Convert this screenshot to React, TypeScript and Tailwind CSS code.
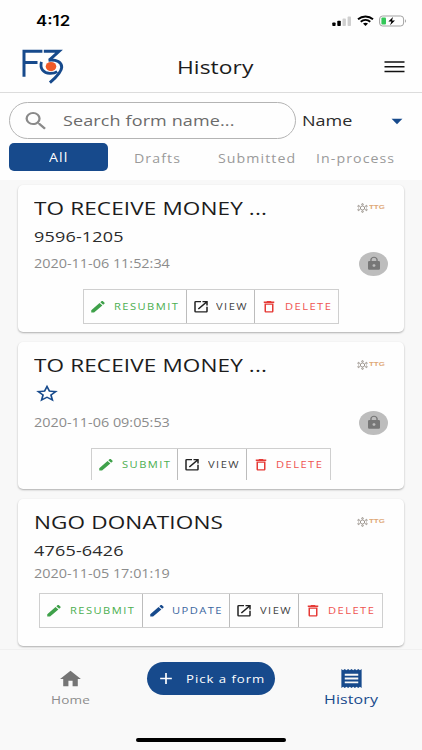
import type { ReactNode } from "react";
import type { IconType } from "react-icons";
import {
  MdAdd,
  MdArrowDropDown,
  MdDeleteOutline,
  MdEdit,
  MdHome,
  MdLock,
  MdOpenInNew,
  MdReceipt,
  MdSearch,
  MdStarBorder,
} from "react-icons/md";

type Action = "resubmit" | "submit" | "update" | "view" | "delete";

type Form = {
  title: string;
  number?: string;
  date: string;
  dateRow: string;
  actionRow: string;
  actionBorder: string;
  locked: boolean;
  actions: Action[];
};

const ACTIONS: Record<
  Action,
  { label: string; Icon: IconType; width: string; icon: string; color: string }
> = {
  resubmit: {
    label: "RESUBMIT",
    Icon: MdEdit,
    width: "w-[102.5px]",
    icon: "text-[#3fa14a]",
    color: "text-[#4caf50]",
  },
  submit: {
    label: "SUBMIT",
    Icon: MdEdit,
    width: "w-[86px]",
    icon: "text-[#3fa14a]",
    color: "text-[#4caf50]",
  },
  update: {
    label: "UPDATE",
    Icon: MdEdit,
    width: "w-[87.5px]",
    icon: "text-[#174a8c]",
    color: "text-[#3a66a0]",
  },
  view: {
    label: "VIEW",
    Icon: MdOpenInNew,
    width: "w-[68.5px]",
    icon: "text-[#222222]",
    color: "text-[#444444]",
  },
  delete: {
    label: "DELETE",
    Icon: MdDeleteOutline,
    width: "w-[83px]",
    icon: "text-[#e53935]",
    color: "text-[#ef5350]",
  },
};

const forms: Form[] = [
  {
    title: "TO RECEIVE MONEY ...",
    number: "9596-1205",
    date: "2020-11-06 11:52:34",
    dateRow: "h-[27px]",
    actionRow: "mt-[12px] h-[35px]",
    actionBorder: "border",
    locked: true,
    actions: ["resubmit", "view", "delete"],
  },
  {
    title: "TO RECEIVE MONEY ...",
    date: "2020-11-06 09:05:53",
    dateRow: "h-[31px]",
    actionRow: "mt-[10px] h-[32px]",
    actionBorder: "border border-b-0",
    locked: true,
    actions: ["submit", "view", "delete"],
  },
  {
    title: "NGO DONATIONS",
    number: "4765-6426",
    date: "2020-11-05 17:01:19",
    dateRow: "h-[19px]",
    actionRow: "mt-[10px] h-[35px]",
    actionBorder: "border",
    locked: false,
    actions: ["resubmit", "update", "view", "delete"],
  },
];

// Text in the app's wide face
const Wide = ({ className = "", children }: { className?: string; children: ReactNode }) => (
  <span
    className={`block origin-left scale-x-120 whitespace-nowrap leading-none ${className}`}
  >
    {children}
  </span>
);

const StatusBar = () => (
  <div className="flex h-[42px] items-center justify-between pl-[35.5px] pr-[15px]">
    <Wide className="font-[Inter] text-[14px] font-semibold text-black">4:12</Wide>
    <div className="flex items-center">
      <svg width="20" height="12" viewBox="0 0 20 12">
        <rect x="0.3" y="7.5" width="3.3" height="3.5" rx="0.8" fill="#000" />
        <rect x="5.3" y="5.8" width="3.5" height="5.2" rx="0.8" fill="#000" />
        <rect x="10.5" y="3.6" width="3.4" height="7.4" rx="0.8" fill="#cfcfcf" />
        <rect x="15.6" y="1.6" width="3.4" height="9.4" rx="0.8" fill="#cfcfcf" />
      </svg>
      <svg className="ml-[5px]" width="17" height="12" viewBox="0 0 17 12" fill="none" stroke="#000">
        <path d="M1 4.3C5.2 .6 11.8 .6 16 4.3" strokeWidth="1.9" />
        <path d="M3.7 6.7c2.8-2.3 6.8-2.3 9.6 0" strokeWidth="1.8" />
        <path d="M6 8.6c1.6-1.1 3.4-1.1 5 0L8.5 11z" fill="#000" stroke="none" />
      </svg>
      <svg className="ml-[5px]" width="28" height="12" viewBox="0 0 28 12">
        <rect x="0.6" y="1" width="24" height="10" rx="3" fill="none" stroke="#a3a3a3" />
        <rect x="2.4" y="2.6" width="4.6" height="6.8" rx="1" fill="#34c759" />
        <path d="M14 1.9 9.4 6.6h3l-1.3 3.6 4.9-4.7h-3z" fill="#000" />
        <path d="M26 4.3c1.3.5 1.3 2.9 0 3.4z" fill="#a3a3a3" />
      </svg>
    </div>
  </div>
);

const Logo = () => (
  <svg width="43" height="36" viewBox="0 0 43 36" fill="none" stroke="#174a8c">
    <path d="M3 27.8V2.3H21.4M3 13.5H16.5" strokeWidth="3" />
    <path d="M22.8 2.3H38L28.6 10.8" strokeWidth="3" />
    <path
      d="M27.5 11.2c8.4-1 13.2 2.2 13.2 7 0 4.4-4.5 9.1-11.8 15.5"
      strokeWidth="3"
    />
    <path d="M20.4 12.9c-1.8 6.9 2.2 11.2 8.4 11.5 2.8.1 5.4-.4 7.4-1.8" strokeWidth="2.8" />
    <ellipse cx="30" cy="17.6" rx="5.3" ry="4.6" fill="#f05a28" stroke="none" />
  </svg>
);

const Header = () => (
  <header className="h-[93px] border-b border-[#dcdcdc] bg-[#fefefe] shadow-[0_1px_2px_rgba(0,0,0,0.12)]">
    <StatusBar />
    <div className="flex h-[50px] items-center justify-between pl-[21px] pr-[17px]">
      <Logo />
      <Wide className="ml-[113px] mr-auto text-[19px] font-medium tracking-[0.05px] text-[#1c1c1c]">
        History
      </Wide>
      <svg width="21" height="12" viewBox="0 0 21 12" stroke="#111111" strokeWidth="1.5">
        <path d="M.5 1H20.5M.5 5.8H20.5M.5 10.6H20.5" />
      </svg>
    </div>
  </header>
);

const SearchRow = () => (
  <div className="flex items-center pl-[9px] pt-[9px]">
    <div className="flex h-[37px] w-[287px] items-center rounded-full border border-[#b4b4b4] pl-[12px]">
      <MdSearch preserveAspectRatio="none" className="h-[24px] w-[28px] text-[#8a8a8a]" />
      <Wide className="ml-[13px] text-[15px] tracking-[0.1px] text-[#6b6b6b]">
        Search form name...
      </Wide>
    </div>
    <Wide className="ml-[5.5px] w-[78.5px] text-[15px] text-[#2b2b2b]">Name</Wide>
    <MdArrowDropDown preserveAspectRatio="none" className="ml-[4px] size-[26px] text-[#174a8c]" />
  </div>
);

const Tabs = () => (
  <div className="flex h-[41px] items-start pl-[9px] pt-[4px] text-[11.8px] tracking-[0.9px] text-[#9a9a9a]">
    <div className="flex h-[28px] w-[99px] items-center rounded-[5px] bg-[#174a8c] pl-[40px] pt-[2px]">
      <Wide className="text-white">All</Wide>
    </div>
    <div className="flex h-[32px] w-[83px] items-center pl-[26px]">
      <Wide>Drafts</Wide>
    </div>
    <div className="flex h-[32px] w-[98px] items-center pl-[26.5px]">
      <Wide>Submitted</Wide>
    </div>
    <div className="flex h-[32px] items-center pl-[26.5px]">
      <Wide>In-process</Wide>
    </div>
  </div>
);

const CompanyLogo = () => (
  <div className="flex h-[10px] w-[28px] items-center">
    <svg width="11" height="10" viewBox="0 0 11 10" fill="none" stroke="#9d968f" strokeWidth="1">
      <ellipse cx="5.5" cy="5" rx="2.2" ry="2" />
      <circle cx="5.5" cy="1.4" r="0.8" />
      <circle cx="5.5" cy="8.6" r="0.8" />
      <circle cx="1.6" cy="3.2" r="0.8" />
      <circle cx="9.4" cy="3.2" r="0.8" />
      <circle cx="1.6" cy="6.8" r="0.8" />
      <circle cx="9.4" cy="6.8" r="0.8" />
    </svg>
    <span className="ml-px block origin-left scale-x-165 font-['Liberation_Sans'] text-[4.8px] font-bold leading-none text-[#dfa877]">
      TTG
    </span>
  </div>
);

const ActionButton = ({ action }: { action: Action }) => {
  const { label, Icon, width, icon, color } = ACTIONS[action];
  return (
    <div className={`flex items-center pl-[5px] ${width}`}>
      <Icon preserveAspectRatio="none" className={`h-[15.5px] w-[18px] shrink-0 ${icon}`} />
      <Wide className={`ml-[6.5px] text-[9.3px] tracking-[1.2px] ${color}`}>{label}</Wide>
    </div>
  );
};

const FormCard = ({ form }: { form: Form }) => (
  <article className="h-[147px] rounded-[5px] bg-[#fefefe] pt-[8px] shadow-[0_1px_2px_rgba(0,0,0,0.3)]">
    <div className="flex h-[30px] items-center justify-between pl-[16px] pr-[19.5px]">
      <Wide className="text-[18.8px] tracking-[0.1px] text-[#1c1c1c]">{form.title}</Wide>
      <CompanyLogo />
    </div>
    <div className="flex h-[27px] items-center pl-[16px]">
      {form.number ? (
        <Wide className="text-[15px] tracking-[0.15px] text-[#2b2b2b]">{form.number}</Wide>
      ) : (
        <MdStarBorder preserveAspectRatio="none" className="h-[21px] w-[26px] text-[#174a8c]" />
      )}
    </div>
    <div className={`flex items-center justify-between px-[16px] ${form.dateRow}`}>
      <Wide className="text-[12px] text-[#8c8c8c]">{form.date}</Wide>
      {form.locked && (
        <div className="flex h-[24px] w-[29px] items-center justify-center rounded-[50%] bg-[#bdbdbd]">
          <MdLock preserveAspectRatio="none" className="h-[15px] w-[18px] text-[#777777]" />
        </div>
      )}
    </div>
    <div className={`flex justify-center ${form.actionRow}`}>
      <div className={`flex divide-x divide-[#bcbcbc] border-[#cfcfcf] ${form.actionBorder}`}>
        {form.actions.map((action) => (
          <ActionButton key={action} action={action} />
        ))}
      </div>
    </div>
  </article>
);

const BottomNav = () => (
  <nav className="flex h-[101px] flex-col justify-between border-t border-[#f0f0f0] bg-[#f9f9f9] pb-[8px]">
    <div className="flex items-start">
      <div className="flex w-[147px] flex-col pl-[51px] pt-[18px]">
        <MdHome preserveAspectRatio="none" className="ml-[7px] h-[22px] w-[25px] text-[#757575]" />
        <Wide className="mt-[4px] text-[11.3px] tracking-[0.15px] text-[#8c8c8c]">Home</Wide>
      </div>
      <button className="mt-[12px] flex h-[33px] w-[128px] items-center rounded-full bg-[#174a8c] pl-[9px] text-white">
        <MdAdd preserveAspectRatio="none" className="h-[19px] w-[20px]" />
        <Wide className="ml-[9.5px] text-[11px] font-medium tracking-[0.8px]">Pick a form</Wide>
      </button>
      <div className="flex flex-col pl-[49px] pt-[17px] text-[#174a8c]">
        <MdReceipt preserveAspectRatio="none" className="ml-[14px] h-[23px] w-[27px]" />
        <Wide className="mt-[2.5px] text-[13.3px] tracking-[0.1px]">History</Wide>
      </div>
    </div>
    <div className="mx-auto h-[4px] w-[150px] rounded-full bg-black" />
  </nav>
);

const App = () => {
  return (
    <div className="flex h-[750px] w-[422px] flex-col overflow-hidden bg-[#f8f8f8] font-['Open_Sans',sans-serif]">
      <Header />
      <section className="h-[87px] bg-[#fefefe]">
        <SearchRow />
        <Tabs />
      </section>
      <main className="flex flex-1 flex-col gap-[10px] px-[18px] pt-[5px]">
        {forms.map((form) => (
          <FormCard key={form.date} form={form} />
        ))}
      </main>
      <BottomNav />
    </div>
  );
};

export default App;
